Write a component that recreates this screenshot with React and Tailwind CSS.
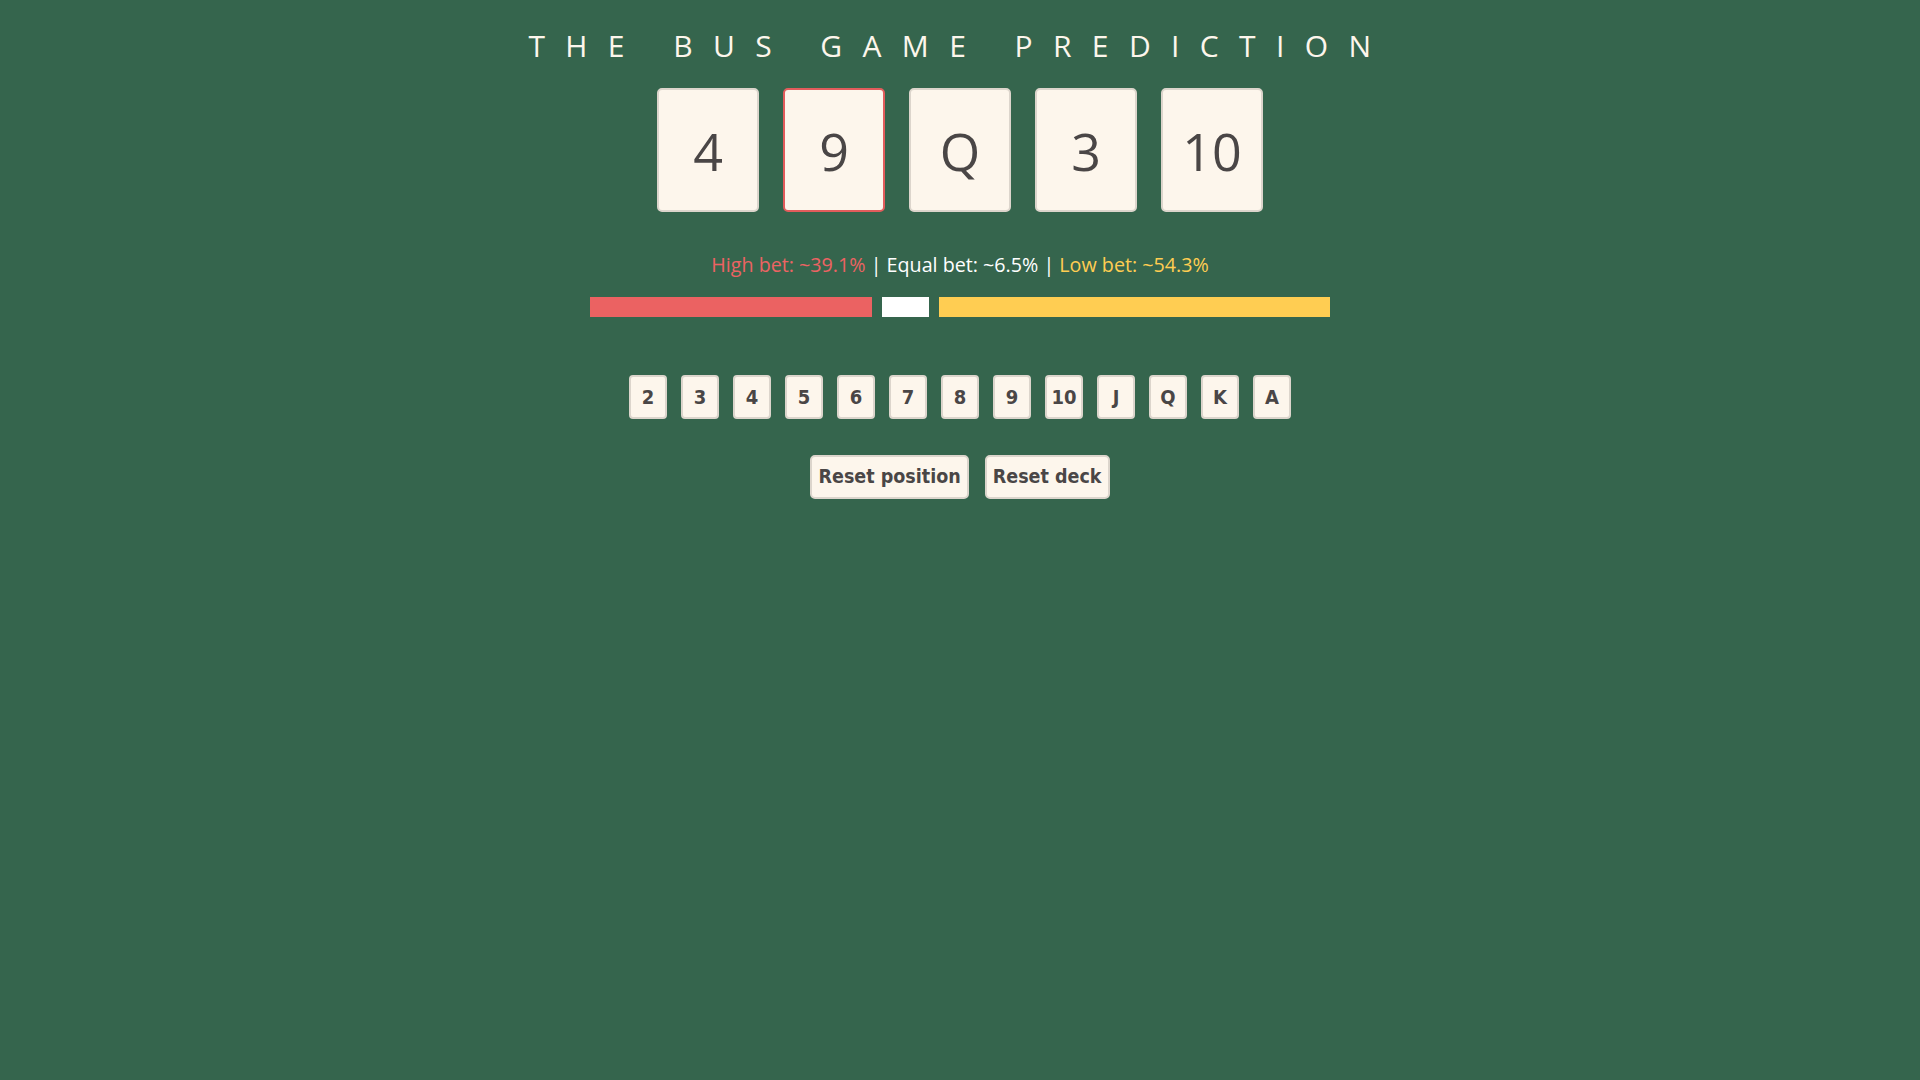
import React, { useState } from 'react';

const ranks = ['2', '3', '4', '5', '6', '7', '8', '9', '10', 'J', 'Q', 'K', 'A'];

const odds = { high: 39.1, equal: 6.5, low: 54.3 };

const Card = ({ value, active }) => (
  <div
    className={
      'w-[102px] h-[124px] rounded-[5px] border-2 bg-[#fdf6ec] flex items-center justify-center text-[52px] font-medium text-[#4a4646] pt-[2px] ' +
      (active ? 'border-[#e25c5c]' : 'border-[#dcd5cc]')
    }
  >
    {value}
  </div>
);

const App = () => {
  const [cards] = useState(['4', '9', 'Q', '3', '10']);
  const [position, setPosition] = useState(1);
  const barTotal = 720;

  return (
    <div
      className="min-h-screen w-full bg-[#35654d] flex flex-col items-center pt-[28px]"
      style={{ fontFamily: '"Open Sans", "Noto Sans", sans-serif' }}
    >
      <h1 className="text-[30px] leading-[1.2] tracking-[0.68em] text-[#fdf6ec] font-normal">
        THE BUS GAME PREDICTION
      </h1>

      <div className="flex gap-[24px] mt-[24px]">
        {cards.map((c, i) => (
          <Card key={i} value={c} active={i === position} />
        ))}
      </div>

      <p className="mt-[38px] text-[19.7px] leading-[1.5] text-white">
        <span className="text-[#ec6363]">High bet: ~{odds.high}%</span>
        <span> | Equal bet: ~{odds.equal}% | </span>
        <span className="text-[#ffcd52]">Low bet: ~{odds.low}%</span>
      </p>

      <div className="flex gap-[10px] mt-[17px]">
        <div className="h-[20px] bg-[#eb6262]" style={{ width: (barTotal * odds.high) / 100 }} />
        <div className="h-[20px] bg-white" style={{ width: (barTotal * odds.equal) / 100 }} />
        <div className="h-[20px] bg-[#ffcd52]" style={{ width: (barTotal * odds.low) / 100 }} />
      </div>

      <div
        className="flex gap-[14px] mt-[58px]"
        style={{ fontFamily: '"DejaVu Sans Condensed", "DejaVu Sans", sans-serif' }}
      >
        {ranks.map((r) => (
          <button
            key={r}
            type="button"
            onClick={() => setPosition((position + 1) % 5)}
            className="w-[38px] h-[44px] rounded-[4px] border-2 border-[#dcd5cc] bg-[#fdf6ec] text-[#4a4646] text-[20px] font-bold flex items-center justify-center"
          >
            {r}
          </button>
        ))}
      </div>

      <div
        className="flex gap-[16px] mt-[36px]"
        style={{ fontFamily: '"DejaVu Sans Condensed", "DejaVu Sans", sans-serif' }}
      >
        <button
          type="button"
          onClick={() => setPosition(0)}
          className="h-[44px] px-[6px] rounded-[5px] border-2 border-[#dcd5cc] bg-[#fdf6ec] text-[#4a4646] text-[19.5px] font-bold"
        >
          Reset position
        </button>
        <button
          type="button"
          className="h-[44px] px-[6px] rounded-[5px] border-2 border-[#dcd5cc] bg-[#fdf6ec] text-[#4a4646] text-[19.5px] font-bold"
        >
          Reset deck
        </button>
      </div>
    </div>
  );
};

export default App;
